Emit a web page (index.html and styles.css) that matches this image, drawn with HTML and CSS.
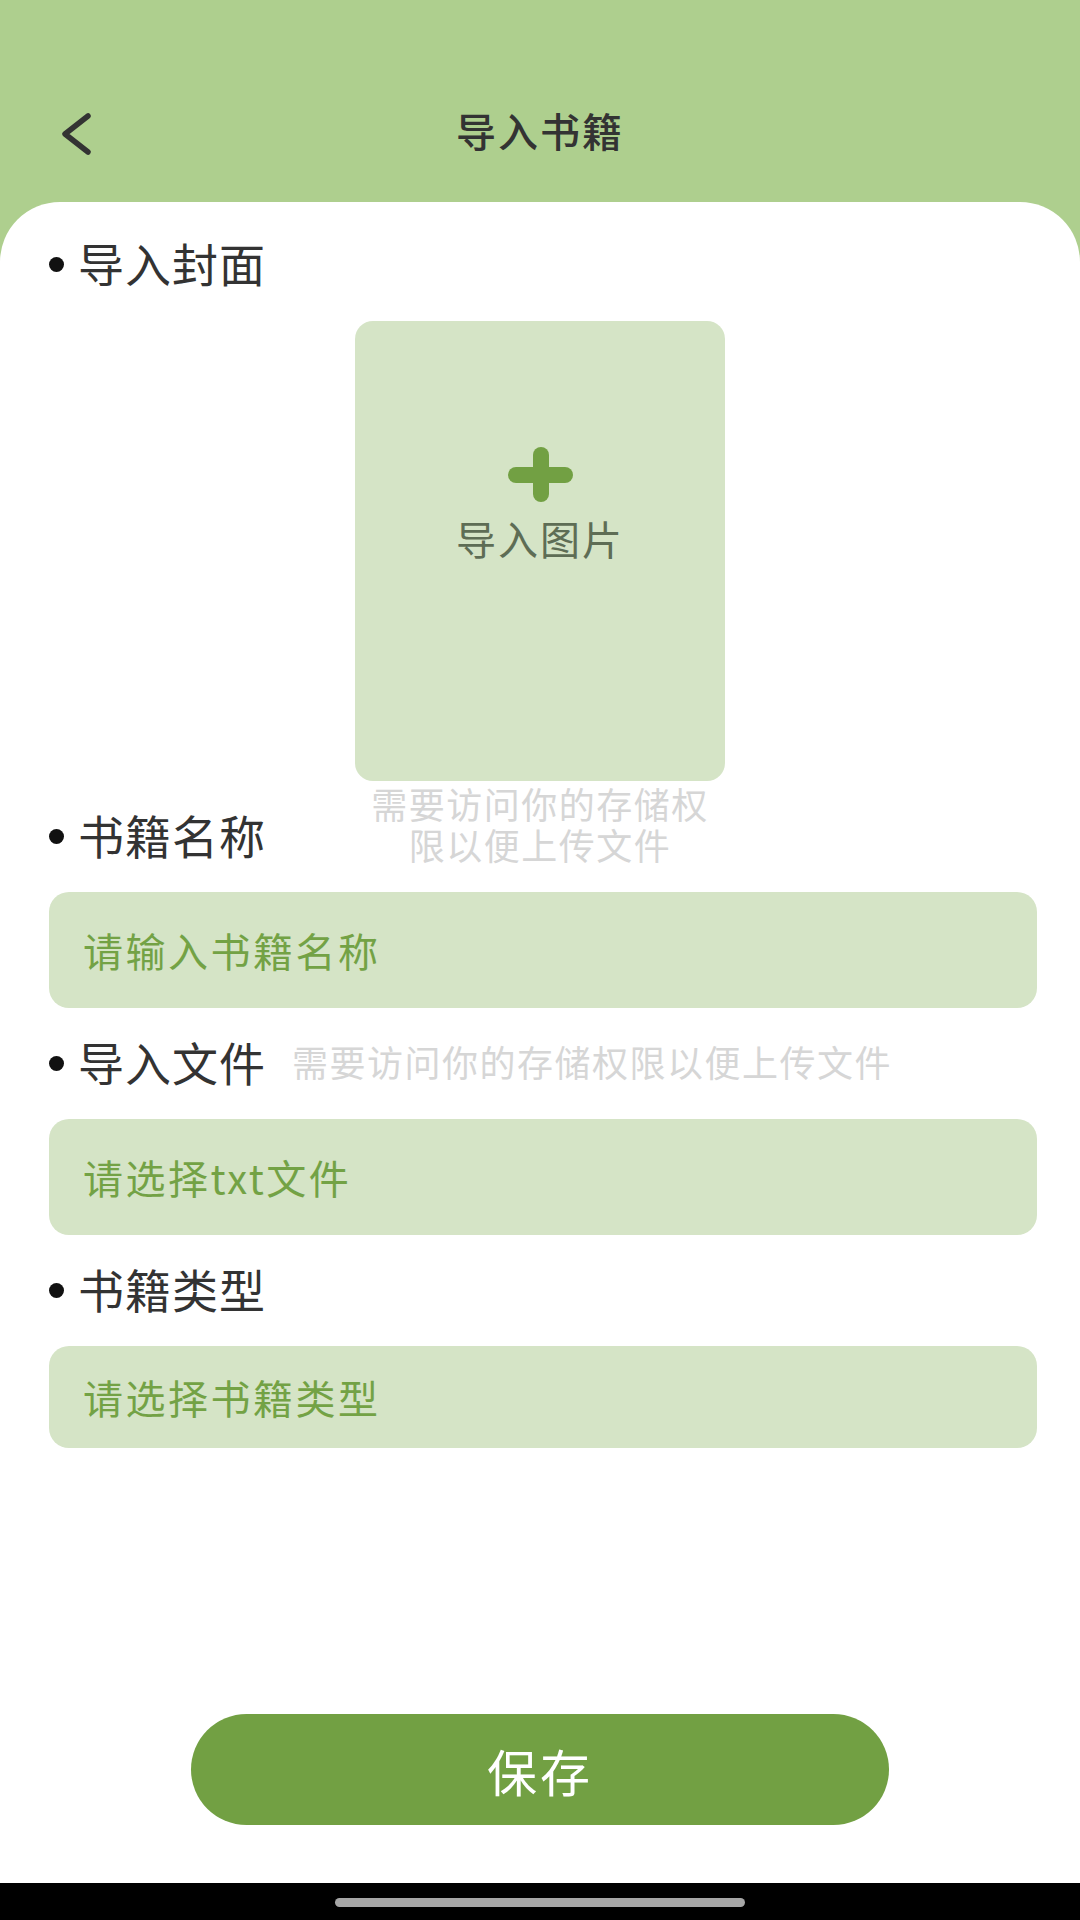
FILE: index.html
```html
<!DOCTYPE html>
<html lang="zh-CN">
<head>
  <meta charset="UTF-8">
  <meta name="viewport" content="width=device-width, initial-scale=1.0">
  <title>导入书籍</title>
  <link rel="stylesheet" href="styles.css">
</head>
<body>
  <div class="page">
    <div class="header">
      <div class="nav">
        <button class="back">
          <svg width="40" height="50" viewBox="0 0 40 50">
            <path d="M27 7 L4 25 L27 43" fill="none" stroke="#333" stroke-width="5.5" stroke-linecap="round" stroke-linejoin="round"/>
          </svg>
        </button>
        <div class="title">导入书籍</div>
      </div>
    </div>

    <div class="card">
      <!-- 封面 -->
      <div class="label">导入封面</div>
      <div class="cover-wrap">
        <div class="cover">
          <span class="plus"></span>
          <div class="cover-text">导入图片</div>
        </div>
        <div class="cover-hint">需要访问你的存储权限以便上传文件</div>
      </div>

      <div class="label">书籍名称</div>
      <div class="field field-tall">请输入书籍名称</div>

      <div class="label">导入文件<span class="hint">需要访问你的存储权限以便上传文件</span></div>
      <div class="field field-tall">请选择txt文件</div>

      <div class="label">书籍类型</div>
      <div class="field">请选择书籍类型</div>

      <button class="save">保存</button>
    </div>

    <div class="sysbar">
      <span class="home-pill"></span>
    </div>
  </div>
</body>
</html>
```

FILE: styles.css
```css
body {
  margin: 0;
  padding: 0;
  font-family: "Noto Sans CJK SC", "Noto Sans", sans-serif;
  background-color: #aecf8e;
}
.page {
  width: 1080px;
  height: 1920px;
  display: flex;
  flex-direction: column;
  overflow: hidden;
}
.header {
  height: 202px;
  flex-shrink: 0;
  background-color: #aecf8e;
  padding-top: 90px;
  box-sizing: border-box;
}
.nav {
  height: 80px;
  display: flex;
  align-items: center;
  position: relative;
}
.back {
  width: 40px;
  height: 50px;
  margin: 8px 0 0 61px;
  padding: 0;
  border: none;
  background: none;
  display: flex;
}
.title {
  position: absolute;
  left: 0;
  right: 0;
  text-align: center;
  font-size: 40px;
  letter-spacing: 2px;
  color: #333;
  font-weight: 500;
  pointer-events: none;
}
.card {
  flex: 1;
  background-color: #fff;
  border-radius: 60px 60px 0 0;
  padding: 32px 43px 58px 49px;
  display: flex;
  flex-direction: column;
}
.label {
  height: 56px;
  line-height: 56px;
  font-size: 46px;
  letter-spacing: 1px;
  color: #333;
  display: flex;
  align-items: center;
  margin-top: 25px;
}
.label:first-child {
  margin-top: 0;
}
.label::before {
  content: "";
  width: 15px;
  height: 15px;
  border-radius: 50%;
  background-color: #111;
  margin-right: 14px;
  position: relative;
  top: 2px;
}
.hint {
  font-size: 36px;
  letter-spacing: 1.5px;
  color: #d6d6d6;
  margin-left: 26px;
}
.cover-wrap {
  position: relative;
  width: 370px;
  margin: 31px 0 0 306px;
}
.cover {
  height: 460px;
  background-color: #d5e4c6;
  border-radius: 18px;
  display: flex;
  flex-direction: column;
  align-items: center;
  padding-top: 126px;
  box-sizing: border-box;
}
.plus {
  position: relative;
  width: 65px;
  height: 55px;
}
.plus::before,
.plus::after {
  content: "";
  position: absolute;
  background-color: #72a043;
  border-radius: 8px;
}
.plus::before {
  left: 0;
  right: 0;
  top: 20px;
  height: 16px;
}
.plus::after {
  top: 0;
  bottom: 0;
  left: 25px;
  width: 16px;
}
.cover-text {
  margin-top: 7px;
  font-size: 40px;
  letter-spacing: 2px;
  color: #5e6d55;
}
.cover-hint {
  position: absolute;
  top: 100%;
  left: 0;
  right: 0;
  margin-top: 2px;
  text-align: center;
  font-size: 36px;
  line-height: 41px;
  letter-spacing: 1.5px;
  color: #d6d6d6;
  padding: 0 14px;
}
.field {
  margin-top: 30px;
  height: 102px;
  background-color: #d5e4c6;
  border-radius: 20px;
  padding-left: 34px;
  display: flex;
  align-items: center;
  font-size: 40px;
  letter-spacing: 2.5px;
  color: #73a245;
}
.field-tall {
  height: 116px;
}
.save {
  margin: auto auto 0;
  width: 698px;
  height: 111px;
  border: none;
  border-radius: 56px / 56px;
  background-color: #72a043;
  color: #fff;
  font-family: inherit;
  font-size: 50px;
  letter-spacing: 3px;
  position: relative;
  left: -3px;
}
.sysbar {
  height: 37px;
  flex-shrink: 0;
  background-color: #000;
  display: flex;
  justify-content: center;
  padding-top: 15px;
  box-sizing: border-box;
}
.home-pill {
  width: 410px;
  height: 9px;
  border-radius: 5px;
  background-color: #a6a6a6;
}
```
